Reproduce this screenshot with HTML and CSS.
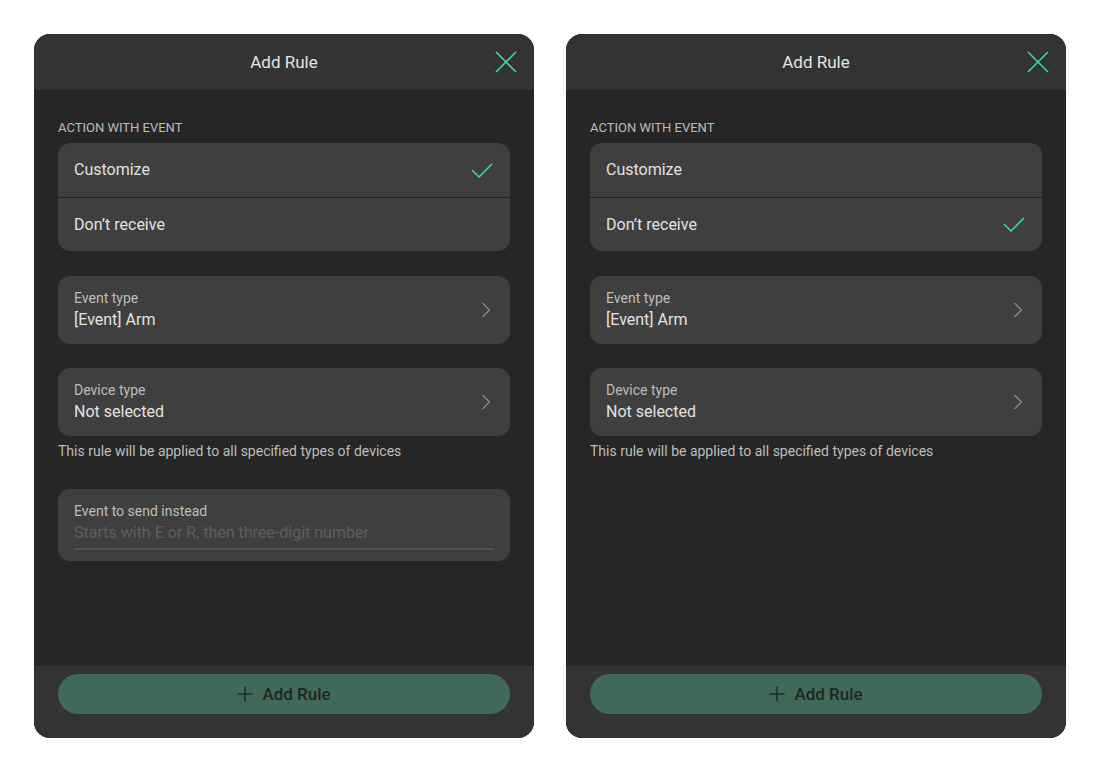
FILE: index.html
```html
<!DOCTYPE html>
<html>
<head>
<meta charset="utf-8">
<link rel="stylesheet" href="styles.css">
</head>
<body>
<div class="page">
  <div class="panel">
    <div class="header">
      <div class="title">Add Rule</div>
      <svg class="close" width="22" height="22" viewBox="0 0 22 22"><path d="M1 1L21 21M21 1L1 21" stroke="#3fd49c" stroke-width="1.6" fill="none"/></svg>
    </div>
    <div class="body">
      <div class="section-label">ACTION WITH EVENT</div>
      <div class="group">
        <div class="row">Customize<svg class="check" width="22" height="16" viewBox="0 0 22 16"><path d="M1 8L8 15L21 2" stroke="#3fd49c" stroke-width="1.6" fill="none"/></svg></div>
        <div class="row">Don’t receive</div>
      </div>
      <div class="field">
        <div class="field-text">
          <div class="field-label">Event type</div>
          <div class="field-value">[Event] Arm</div>
        </div>
        <svg class="chev" width="10" height="16" viewBox="0 0 10 16"><path d="M1.5 1L8.5 8L1.5 15" stroke="#8a8a8a" stroke-width="1.3" fill="none"/></svg>
      </div>
      <div class="field">
        <div class="field-text">
          <div class="field-label">Device type</div>
          <div class="field-value">Not selected</div>
        </div>
        <svg class="chev" width="10" height="16" viewBox="0 0 10 16"><path d="M1.5 1L8.5 8L1.5 15" stroke="#8a8a8a" stroke-width="1.3" fill="none"/></svg>
      </div>
      <div class="helper">This rule will be applied to all specified types of devices</div>
      <div class="input-field">
        <div class="field-label">Event to send instead</div>
        <div class="placeholder">Starts with E or R, then three-digit number</div>
        <div class="underline"></div>
      </div>
    </div>
    <div class="footer">
      <div class="btn"><svg class="plus" width="16" height="16" viewBox="0 0 16 16"><path d="M8 0.5V15.5M0.5 8H15.5" stroke="#1f2a25" stroke-width="1.5" fill="none"/></svg><span>Add Rule</span></div>
    </div>
  </div>

  <div class="panel">
    <div class="header">
      <div class="title">Add Rule</div>
      <svg class="close" width="22" height="22" viewBox="0 0 22 22"><path d="M1 1L21 21M21 1L1 21" stroke="#3fd49c" stroke-width="1.6" fill="none"/></svg>
    </div>
    <div class="body">
      <div class="section-label">ACTION WITH EVENT</div>
      <div class="group">
        <div class="row">Customize</div>
        <div class="row">Don’t receive<svg class="check" width="22" height="16" viewBox="0 0 22 16"><path d="M1 8L8 15L21 2" stroke="#3fd49c" stroke-width="1.6" fill="none"/></svg></div>
      </div>
      <div class="field">
        <div class="field-text">
          <div class="field-label">Event type</div>
          <div class="field-value">[Event] Arm</div>
        </div>
        <svg class="chev" width="10" height="16" viewBox="0 0 10 16"><path d="M1.5 1L8.5 8L1.5 15" stroke="#8a8a8a" stroke-width="1.3" fill="none"/></svg>
      </div>
      <div class="field">
        <div class="field-text">
          <div class="field-label">Device type</div>
          <div class="field-value">Not selected</div>
        </div>
        <svg class="chev" width="10" height="16" viewBox="0 0 10 16"><path d="M1.5 1L8.5 8L1.5 15" stroke="#8a8a8a" stroke-width="1.3" fill="none"/></svg>
      </div>
      <div class="helper">This rule will be applied to all specified types of devices</div>
    </div>
    <div class="footer">
      <div class="btn"><svg class="plus" width="16" height="16" viewBox="0 0 16 16"><path d="M8 0.5V15.5M0.5 8H15.5" stroke="#1f2a25" stroke-width="1.5" fill="none"/></svg><span>Add Rule</span></div>
    </div>
  </div>
</div>
</body>
</html>
```

FILE: styles.css
```css
* { box-sizing: border-box; }
html, body { margin: 0; padding: 0; background: #ffffff; }
body { font-family: Roboto, "Liberation Sans", sans-serif; }
.page {
  display: flex;
  gap: 32px;
  padding: 34px 34px;
}
.panel {
  width: 500px;
  height: 704px;
  border-radius: 16px;
  overflow: hidden;
  background: #262626;
  display: flex;
  flex-direction: column;
}
.header {
  height: 56px;
  flex: none;
  background: #333333;
  display: flex;
  align-items: center;
  justify-content: center;
  position: relative;
}
.title {
  color: #e4e4e4;
  font-size: 17px;
}
.close {
  position: absolute;
  right: 17px;
  top: 17px;
}
.body {
  flex: 1;
  padding: 30px 24px 0;
  display: flex;
  flex-direction: column;
}
.section-label {
  font-size: 13px;
  line-height: 16px;
  color: #bcbcbc;
  margin-bottom: 7px;
}
.group {
  background: #3f3f3f;
  border-radius: 12px;
  overflow: hidden;
}
.row {
  height: 54px;
  padding: 0 16px 1px 16px;
  display: flex;
  align-items: center;
  justify-content: space-between;
  color: #e2e2e2;
  font-size: 16px;
}
.row + .row { border-top: 1px solid #262626; }
.check { margin-right: 1px; }
.field {
  margin-top: 25px;
  height: 68px;
  background: #3f3f3f;
  border-radius: 12px;
  padding: 13px 19px 11px 16px;
  display: flex;
  align-items: center;
  justify-content: space-between;
}
.field + .field { margin-top: 24px; }
.chev { margin-bottom: 2px; }
.field-text { display: flex; flex-direction: column; }
.field-label {
  font-size: 14px;
  line-height: 18px;
  color: #bdbdbd;
}
.field-value {
  font-size: 16px;
  line-height: 26px;
  color: #e2e2e2;
}
.helper {
  margin-top: 6px;
  font-size: 14px;
  line-height: 18px;
  color: #bdbdbd;
}
.input-field {
  margin-top: 29px;
  height: 72px;
  background: #3f3f3f;
  border-radius: 12px;
  padding: 13px 16px 0;
  display: flex;
  flex-direction: column;
}
.placeholder {
  font-size: 16px;
  line-height: 25px;
  color: #5e5e5e;
}
.underline {
  margin-top: 3px;
  height: 2px;
  background: #4f4f4f;
}
.footer {
  height: 72px;
  flex: none;
  background: #333333;
  padding: 8px 24px 24px;
}
.btn {
  height: 40px;
  border-radius: 20px;
  background: #41695a;
  display: flex;
  align-items: center;
  justify-content: center;
  gap: 9px;
  color: #1f2622;
  font-size: 17px;
  font-weight: 500;
}
```
